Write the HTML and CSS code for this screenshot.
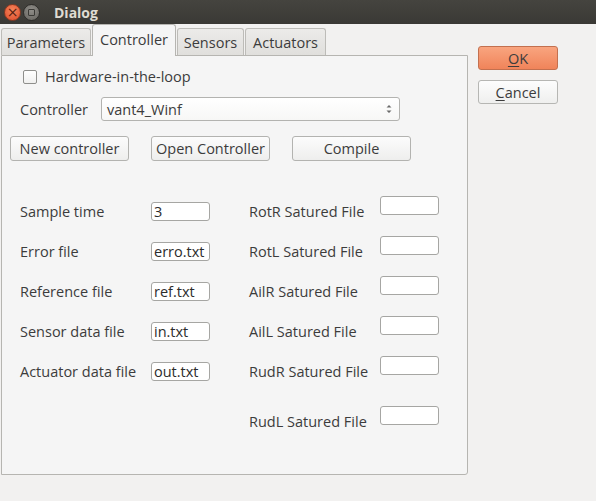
FILE: index.html
```html
<!DOCTYPE html>
<html>
<head>
<meta charset="utf-8">
<link rel="stylesheet" href="styles.css">
</head>
<body>
<div class="window">
  <div class="titlebar">
    <span class="wbtn close">×</span>
    <span class="wbtn mini"><span class="sq"></span></span>
    <span class="title">Dialog</span>
  </div>
  <div class="main">
    <div class="notebook">
      <div class="tabbar">
        <div class="tab t-params">Parameters</div>
        <div class="tab active t-ctrl">Controller</div>
        <div class="tab t-sens">Sensors</div>
        <div class="tab t-act">Actuators</div>
        <div class="tabfill"></div>
      </div>
      <div class="pane">
        <label class="check-row"><span class="checkbox"></span>Hardware-in-the-loop</label>
        <div class="ctrl-row">
          <span class="lbl">Controller</span>
          <div class="combo"><span>vant4_Winf</span>
            <svg class="spin" width="8" height="12" viewBox="0 0 8 12"><path d="M1.5 4.5 L4 2 L6.5 4.5 Z M1.5 7.5 L4 10 L6.5 7.5 Z" fill="#6a6a6a"/></svg>
          </div>
        </div>
        <div class="btn-row">
          <button class="btn">New controller</button>
          <button class="btn">Open Controller</button>
          <button class="btn">Compile</button>
        </div>
        <div class="form">
          <div class="col left">
            <div class="row"><span class="flbl">Sample time</span><span class="entry">3</span></div>
            <div class="row"><span class="flbl">Error file</span><span class="entry">erro.txt</span></div>
            <div class="row"><span class="flbl">Reference file</span><span class="entry">ref.txt</span></div>
            <div class="row"><span class="flbl">Sensor data file</span><span class="entry">in.txt</span></div>
            <div class="row"><span class="flbl">Actuator data file</span><span class="entry">out.txt</span></div>
          </div>
          <div class="col right">
            <div class="row"><span class="flbl">RotR Satured File</span><span class="entry up"></span></div>
            <div class="row"><span class="flbl">RotL Satured File</span><span class="entry up"></span></div>
            <div class="row"><span class="flbl">AilR Satured File</span><span class="entry up"></span></div>
            <div class="row"><span class="flbl">AilL Satured File</span><span class="entry up"></span></div>
            <div class="row"><span class="flbl">RudR Satured File</span><span class="entry up"></span></div>
            <div class="row last"><span class="flbl">RudL Satured File</span><span class="entry up"></span></div>
          </div>
        </div>
      </div>
    </div>
    <div class="side">
      <button class="dbtn ok"><u>O</u>K</button>
      <button class="dbtn cancel"><u>C</u>ancel</button>
    </div>
  </div>
</div>
</body>
</html>
```
FILE: styles.css
```css
* { box-sizing: border-box; }
html, body { margin: 0; padding: 0; }
body {
  width: 596px; height: 501px; overflow: hidden;
  background: #f2f1f0;
  font-family: "Open Sans", "DejaVu Sans", sans-serif;
  font-size: 14.5px;
  color: #3c3c3c;
}
.window { width: 596px; height: 501px; }
.titlebar {
  height: 24px;
  background: linear-gradient(#45443f, #3a3935);
  display: flex; align-items: center;
  padding-left: 4px;
}
.wbtn {
  width: 17px; height: 17px; border-radius: 50%;
  display: flex; align-items: center; justify-content: center;
}
.close {
  background: radial-gradient(circle at 50% 35%, #f5855a, #de4c2c);
  color: #5a1e10; font-size: 14px; line-height: 1; font-family: "DejaVu Sans", sans-serif;
  border: 1px solid #8a3a22;
}
.mini {
  margin-left: 2px;
  background: radial-gradient(circle at 50% 35%, #8f8d88, #65635e);
  border: 1px solid #2d2c29;
}
.mini .sq { width: 7px; height: 7px; border: 1.5px solid #3b3a36; border-radius: 1px; }
.title {
  margin-left: 14px;
  font-weight: bold; color: #dfdbd2; font-size: 14px;
}
.main { display: flex; }
.notebook { margin-left: 1px; width: 467px; }
.tabbar { display: flex; align-items: flex-end; height: 31px; }
.tab {
  height: 27px;
  display: flex; align-items: center; justify-content: center;
  border: 1px solid #bdbcb8; border-bottom: none;
  border-radius: 3px 3px 0 0;
  background: linear-gradient(#ecebe9, #e0dfdc);
  margin-right: 1px;
  color: #3c3c3c;
}
.t-params { width: 90px; }
.t-ctrl { width: 84px; }
.t-sens { width: 67px; }
.t-act { width: 81px; }
.tab.active {
  height: 32px;
  background: #f5f5f5;
  position: relative; top: 1px;
  border-color: #b6b5b1;
  align-items: flex-start; padding-top: 5px;
}
.tabfill { flex: 1; }
.pane {
  height: 420px;
  background: #f5f5f5;
  border: 1px solid #b6b5b1;
  border-radius: 0 0 3px 0;
}
.check-row {
  display: flex; align-items: center;
  height: 41px; padding-left: 21px;
}
.checkbox {
  width: 14px; height: 14px; border: 1px solid #8f8f8c; border-radius: 2px;
  background: linear-gradient(#ffffff, #f0f0ef);
  margin-right: 8px;
}
.ctrl-row { display: flex; align-items: center; height: 24px; padding-left: 18px; }
.lbl { width: 81px; }
.combo {
  width: 299px; height: 24px;
  border: 1px solid #b3b3b0; border-radius: 3px;
  background: linear-gradient(#ffffff, #f7f7f6);
  display: flex; align-items: center; justify-content: space-between;
  padding: 0 6px 0 5px;
}
.btn-row { display: flex; gap: 22px; padding-left: 8px; margin-top: 15px; }
.btn {
  width: 119px; height: 25px;
  font: inherit; color: #3c3c3c;
  border: 1px solid #b3b3b0; border-radius: 3px;
  background: linear-gradient(#fcfcfc, #eeeeed);
  padding: 0;
}
.form { display: flex; margin-top: 30px; }
.col { display: flex; flex-direction: column; }
.left { padding-left: 18px; width: 247px; }
.row { display: flex; align-items: center; height: 40px; }
.row.last { margin-top: 10px; }
.flbl { width: 131px; white-space: nowrap; }
.entry {
  width: 59px; height: 19px;
  background: #fff; border: 1px solid #a6a6a3; border-radius: 3px;
  padding-left: 2px; line-height: 17px; color: #2c2c2c; overflow: hidden;
}
.entry.up { margin-bottom: 12px; }
.side { display: flex; flex-direction: column; gap: 10px; margin-left: 10px; margin-top: 22px; }
.dbtn {
  width: 80px; height: 24px; font: inherit; padding: 0; border-radius: 3px;
}
.dbtn u { text-decoration-thickness: 1px; text-underline-offset: 2px; }
.ok {
  background: linear-gradient(#f9a57f, #f0845a);
  border: 1px solid #c3704f; color: #3c3c3c;
}
.cancel {
  background: linear-gradient(#fdfdfd, #efefee);
  border: 1px solid #b6b6b3; color: #3c3c3c;
}
```
